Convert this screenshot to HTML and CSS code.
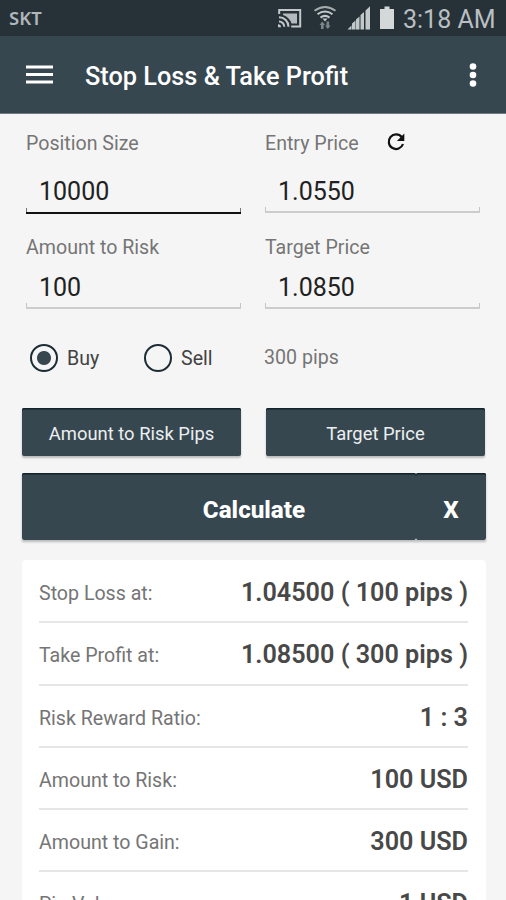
FILE: index.html
```html
<!DOCTYPE html>
<html lang="en">
<head>
<meta charset="utf-8">
<title>Stop Loss &amp; Take Profit</title>
<link rel="stylesheet" href="styles.css">
</head>
<body>
<div class="status">
  <span class="carrier">SKT</span>
  <svg class="status-icons" width="120" height="36" viewBox="275 0 120 36">
    <g fill="none" stroke="#c3c8ca" stroke-width="2">
      <path d="M279.200 14V10h21v16.600h-9"/>
      <path d="M279 17.200a9.500 9.500 0 0 1 9.500 9.500M279 21.400a5.300 5.300 0 0 1 5.300 5.300"/>
    </g>
    <path d="M283 13.500h14v10h-5.500a13 13 0 0 0-8.500-8.500z" fill="#b4babd"/>
    <path d="M278 24.200a3 3 0 0 1 3 3h-3z" fill="#c3c8ca"/>
    <g fill="none" stroke="#a4abae" stroke-width="2">
      <path d="M314.500 10.800q10.500-7.500 21 0"/>
      <path d="M317.500 14.200q7.500-5.400 15 0" stroke="#c3c8ca"/>
      <path d="M320.500 17.600q4.500-3.400 9 0" stroke="#c3c8ca"/>
    </g>
    <path d="M322.500 18.500h5l-2.500 3z" fill="#c3c8ca"/>
    <path d="M319.500 25l2.800-3.500 2.800 3.500h-1.500v4h-2.600v-4zM325 25.500h1.500v-4h2.600v4h1.500l-2.800 3.500z" fill="#7c868a"/>
    <path d="M347.500 29.500l4-4v4zM352 29.500v-6l3.500-3v9zM356 29.500v-10l3.500-3v13zM360.500 29.500V15l3.500-3v17.500zM365.500 29.500v-19l4.500-4.200v23.200z" fill="#c3c8ca"/>
    <path d="M380 9h4.500V6.500h5V9h4.500v20h-14z" fill="#d5d8d9"/>
  </svg>
  <span class="clock">3:18 AM</span>
</div>
<header class="bar">
  <svg class="menu" width="27" height="20" viewBox="0 0 27 20"><path d="M0 2h27M0 9.500h27M0 17h27" stroke="#fff" stroke-width="3.200"/></svg>
  <h1>Stop Loss &amp; Take Profit</h1>
  <svg class="more" width="8" height="26" viewBox="0 0 8 26" fill="#fff"><circle cx="4" cy="4.500" r="3.300"/><circle cx="4" cy="13" r="3.300"/><circle cx="4" cy="21.500" r="3.300"/></svg>
</header>
<main>
  <div class="fields">
    <div class="field"><label>Position Size</label><div class="input focus">10000</div></div>
    <div class="field"><label><span class="entry">Entry Price</span><svg class="refresh" width="18" height="18" viewBox="0 0 18 18"><path d="M14.800 4.200A7.300 7.300 0 1 0 16 11" fill="none" stroke="#111" stroke-width="2.200"/><path d="M17.300.600v7.400h-7.400z" fill="#111"/></svg></label><div class="input">1.0550</div></div>
    <div class="field second"><label>Amount to Risk</label><div class="input">100</div></div>
    <div class="field second"><label>Target Price</label><div class="input">1.0850</div></div>
  </div>
  <div class="choice">
    <span class="radio on"></span><span class="opt buy">Buy</span>
    <span class="radio"></span><span class="opt sell">Sell</span>
    <span class="pips">300 pips</span>
  </div>
  <div class="actions">
    <div class="btn">Amount to Risk Pips</div>
    <div class="btn">Target Price</div>
  </div>
  <div class="calc">
    <div class="btn big">Calculate</div>
    <div class="btn big clear">X</div>
  </div>
  <div class="card">
    <div class="row"><span>Stop Loss at:</span><b>1.04500 ( 100 pips )</b></div>
    <div class="row"><span>Take Profit at:</span><b>1.08500 ( 300 pips )</b></div>
    <div class="row"><span>Risk Reward Ratio:</span><b>1 : 3</b></div>
    <div class="row"><span>Amount to Risk:</span><b>100 USD</b></div>
    <div class="row"><span>Amount to Gain:</span><b>300 USD</b></div>
    <div class="row"><span>Pip Value:</span><b>1 USD</b></div>
  </div>
</main>
</body>
</html>
```

FILE: styles.css
```css
* { box-sizing: border-box; }
body {
  margin: 0;
  height: 900px;
  overflow: hidden;
  background: #f5f5f5;
  font-family: Roboto, sans-serif;
  color: #757575;
}
.status {
  height: 36px;
  background: #263238;
  display: flex;
  align-items: center;
  padding: 0 12px 0 9px;
}
.carrier { font: 600 18.500px/36px "Noto Sans", sans-serif; color: #b0b6b9; }
.status-icons { margin-left: auto; }
.clock { width: 91px; margin-left: 8px; font-size: 25px; line-height: 40px; padding-top: 4px; color: #b9bfc2; white-space: nowrap; }
.bar {
  height: 78px;
  background: #37474f;
  border-bottom: 1px solid #6f7a80;
  display: flex;
  align-items: center;
  padding: 0 29px 0 26px;
}
.menu { margin-right: 32px; }
.bar h1 { margin: 0; padding-top: 3px; font-size: 25.300px; font-weight: 500; color: #fff; white-space: nowrap; }
.more { margin-left: auto; }
main { padding: 17px 20px 0 22px; }
.fields { display: grid; grid-template-columns: 215px 215px; column-gap: 24px; padding-left: 4px; }
.field { height: 104px; }
.field.second { height: 91px; }
label { display: flex; align-items: center; height: 24px; font-size: 19.600px; }
.entry { width: 122px; }
.refresh { margin-top: -2px; }
.input {
  height: 41px;
  margin-top: 17px;
  padding-left: 13px;
  font-size: 25px;
  line-height: 39px;
  color: #212121;
  border-bottom: 2px solid #ccc;
  background: linear-gradient(#c4c4c4, #c4c4c4) 0 100%/1px 4px no-repeat, linear-gradient(#c4c4c4, #c4c4c4) 100% 100%/1px 4px no-repeat;
}
.input.focus {
  height: 42px;
  border-bottom: 2px solid #111;
  background: linear-gradient(#777, #777) 0 100%/1px 4px no-repeat, linear-gradient(#777, #777) 100% 100%/1px 4px no-repeat;
}
.second .input { margin-top: 9px; }
.choice { display: flex; align-items: center; height: 30px; margin-top: 17px; padding-left: 8px; font-size: 19.600px; }
.radio { width: 28px; height: 28px; border: 2.500px solid #1c2d36; border-radius: 50%; }
.radio.on { background: radial-gradient(circle, #37474f 6.500px, transparent 7.500px); }
.opt { margin-left: 9px; color: #424242; }
.buy { width: 77px; }
.sell { width: 83px; }
.pips { margin-top: -2px; }
.actions { display: flex; gap: 25px; margin-top: 35px; }
.btn {
  width: 219px;
  height: 48px;
  border-radius: 2px;
  background: #37474f;
  box-shadow: inset 0 1.500px #13232c, 0 2px 2px #bbb;
  color: #eceff1;
  font-size: 18.400px;
  line-height: 51px;
  text-align: center;
}
.calc { display: flex; margin-top: 17px; box-shadow: 0 2px 2px #bbb; }
.btn.big { width: 394px; height: 67px; padding-left: 70px; font-size: 24.200px; line-height: 74px; font-weight: 800; color: #fff; box-shadow: inset 0 1.500px #13232c; }
.btn.clear { width: 70px; padding-left: 0; }
.card { width: 464px; height: 345px; margin-top: 20px; padding: 1px 18px 0 17px; border-radius: 4px; background: #fff; overflow: hidden; }
.row { display: flex; justify-content: space-between; height: 62.250px; border-bottom: 2px solid #e6e6e6; font-size: 19.600px; line-height: 65px; white-space: nowrap; }
.row b { font-size: 25.200px; line-height: 64px; font-weight: 600; color: #484848; }
```
